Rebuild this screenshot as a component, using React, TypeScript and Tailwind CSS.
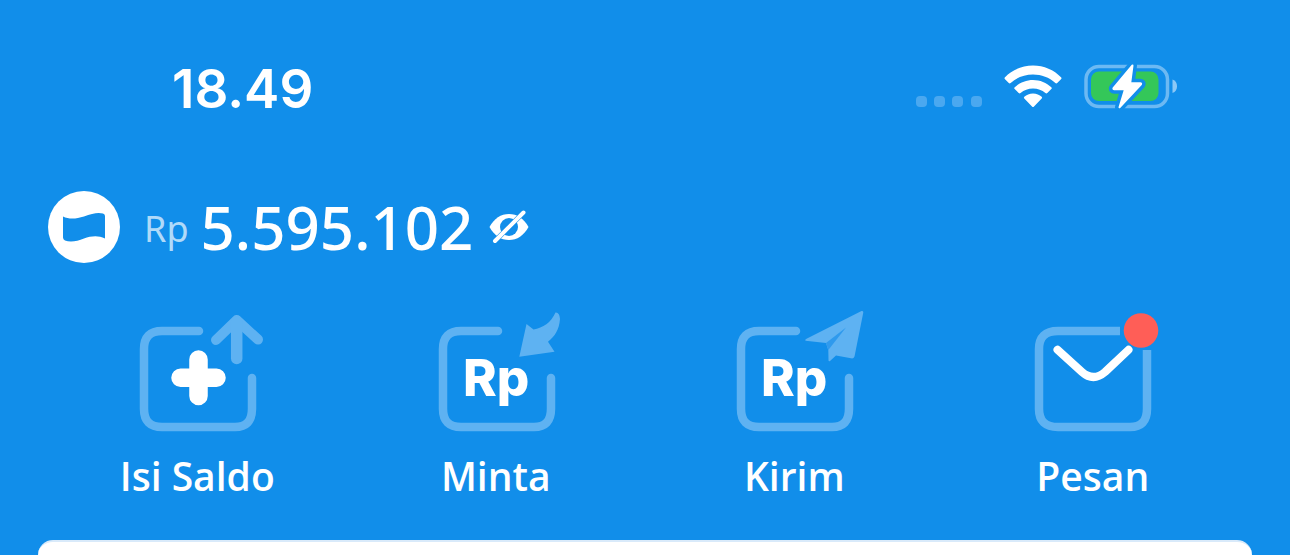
import type { ReactNode } from "react";

function SignalDots() {
  return (
    <svg viewBox="0 0 66 11" className="w-[66px] h-[11px] mt-8" aria-hidden="true">
      <g fill="#4aa8f0">
        <rect x="0" y="0" width="11" height="11" rx="4" />
        <rect x="18" y="0" width="11" height="11" rx="4" />
        <rect x="36" y="0" width="11" height="11" rx="4" />
        <rect x="55" y="0" width="11" height="11" rx="4" />
      </g>
    </svg>
  );
}

function WifiIcon() {
  return (
    <svg viewBox="0 0 58 43" className="w-[58px] h-[43px]" fill="#fff" aria-hidden="true">
      <path d="M29 0.5C40 0.5 50 5 57 12.2Q58 13.2 57 14.2L53.2 18Q52.3 18.8 51.3 17.9C45.3 12.4 37.5 9.5 29 9.5S12.7 12.4 6.7 17.9Q5.7 18.8 4.8 18L1 14.2Q0 13.2 1 12.2C8 5 18 0.5 29 0.5Z" />
      <path d="M29 15C36 15 42.5 17.8 47.3 22.3Q48.2 23.2 47.3 24.1L43.3 28Q42.4 28.8 41.4 28C38 25.2 33.8 23.6 29 23.6S20 25.2 16.6 28Q15.6 28.8 14.7 28L10.7 24.1Q9.8 23.2 10.7 22.3C15.5 17.8 22 15 29 15Z" />
      <path d="M29 28.5C32.5 28.5 35.5 29.8 37.7 31.7Q38.600 32.600 37.700 33.500L30 41.600Q29 42.600 28 41.600L20.300 33.500Q19.400 32.600 20.300 31.700C22.500 29.800 25.500 28.500 29 28.500Z" />
    </svg>
  );
}

const BOLT = "M48.5 1.5L29.5 24.2Q29 25.3 30.3 25.3H41L35.5 43.2L57 20.3Q57.5 19.3 56.3 19.2H46.2Z";

function BatteryIcon() {
  return (
    <svg viewBox="0 0 94 45" className="w-[94px] h-[45px]" strokeLinejoin="round" aria-hidden="true">
      <rect x="2" y="2.5" width="81.5" height="40" rx="13" fill="none" stroke="#6cb9f3" strokeWidth="3.5" />
      <rect x="7" y="7.5" width="67.5" height="29.5" rx="8" fill="#34c759" />
      <path d="M88.5 15.5C91.5 16.5 93 19 93 22.3S91.5 28 88.5 29Z" fill="#8cc8f6" />
      <path d={BOLT} fill="#118eea" stroke="#118eea" strokeWidth="9" />
      <path d={BOLT} fill="#fff" stroke="#fff" strokeWidth="2" />
    </svg>
  );
}

function DanaLogo() {
  return (
    <svg viewBox="0 0 72 72" className="w-[72px] h-[72px]" role="img" aria-label="DANA">
      <circle cx="36" cy="36" r="36" fill="#fff" />
      <path
        d="M15 25.5C21 28.5 28 28 36 25.5C44 22.5 50 21 55 22.5Q57 23 57 25V47.500C50 44 43 45 36 47.500C29 50.500 22 51.500 17 49.500Q15 48.500 15 46.500Z"
        fill="#118eea"
      />
    </svg>
  );
}

function HiddenEyeIcon() {
  return (
    <svg viewBox="0 0 40 34" className="w-10 h-[34px]" aria-hidden="true">
      <path d="M0.5 17C5 8.5 12 4 20 4S35 8.5 39.5 17C35 25.5 28 30 20 30S5 25.5 0.5 17Z" fill="#fff" />
      <circle cx="20" cy="17" r="9" fill="#118eea" />
      <path d="M6 31L34.5 2.5" stroke="#118eea" strokeWidth="5" />
      <path d="M6 31L34.5 2.5" stroke="#fff" strokeWidth="4" strokeLinecap="round" />
    </svg>
  );
}

const OPEN_FRAME = "M74 23H37Q19 23 19 41V101Q19 119 37 119H110Q127 119 127 101V70";

function ActionIcon({ frame = OPEN_FRAME, children }: { frame?: string; children: ReactNode }) {
  return (
    <svg viewBox="0 0 144 128" className="w-36 h-32" fill="none" aria-hidden="true">
      <path d={frame} stroke="#5eb2f2" strokeWidth="8.5" strokeLinecap={frame === OPEN_FRAME ? "round" : "butt"} />
      {children}
    </svg>
  );
}

function RpText() {
  return (
    <text x="39" y="88" fill="#fff" className="font-['Inter',sans-serif] text-[51px] font-extrabold">
      Rp
    </text>
  );
}

function TopUpIcon() {
  return (
    <ActionIcon>
      <path d="M73.5 51.5V88M55.5 69.7H91.5" stroke="#fff" strokeWidth="18.5" strokeLinecap="round" />
      <path d="M91 32L111.7 12L133 31.5" stroke="#5eb2f2" strokeWidth="10" strokeLinecap="round" strokeLinejoin="round" />
      <path d="M111.7 14V50.5" stroke="#5eb2f2" strokeWidth="11.5" strokeLinecap="round" />
    </ActionIcon>
  );
}

function RequestIcon() {
  return (
    <ActionIcon>
      <RpText />
      <path
        d="M95.3 48.7L102.5 16L109.5 21.5C119 20 127 14.5 131.5 4.5Q135.5 4 136 11C135 22 131 28 124 33.7L130.5 43.7Z"
        fill="#5eb2f2"
      />
    </ActionIcon>
  );
}

function SendIcon() {
  return (
    <ActionIcon>
      <RpText />
      <path
        d="M83.5 32.8Q82.5 31.8 84.5 30.8L139.5 3Q141.5 2.5 141.3 4.5L132.5 48.5Q131.5 51 129 50.3L114 47.5L108 53Q106.5 54 106.5 52L106.3 42L104 35Z"
        fill="#5eb2f2"
      />
      <path d="M104 35L124 19.5L106.3 42Z" fill="#2f9aed" />
    </ActionIcon>
  );
}

function MessageIcon() {
  return (
    <ActionIcon frame="M99 23H37Q18 23 18 41V101Q18 119 37 119H109Q126 119 126 101V42">
      <path
        d="M36.5 41.8L61 64Q72.3 74 84 64L107.5 41.8"
        stroke="#fff"
        strokeWidth="8"
        strokeLinecap="round"
        strokeLinejoin="round"
      />
      <circle cx="120" cy="22.5" r="17.3" fill="#ff5e57" />
    </ActionIcon>
  );
}

const actions = [
  { label: "Isi Saldo", icon: <TopUpIcon /> },
  { label: "Minta", icon: <RequestIcon /> },
  { label: "Kirim", icon: <SendIcon /> },
  { label: "Pesan", icon: <MessageIcon /> },
];

export default function App() {
  return (
    <div className="min-h-screen flex flex-col bg-[#118eea] text-white font-['Open_Sans',sans-serif]">
      <header className="flex items-start justify-between pt-16 pl-[172px] pr-[112px]">
        <time className="font-['Inter',sans-serif] font-semibold text-[53px] leading-[50px]">18.49</time>
        <div className="flex items-start">
          <SignalDots />
          <div className="ml-[22px] mt-px">
            <WifiIcon />
          </div>
          <div className="ml-[22px]">
            <BatteryIcon />
          </div>
        </div>
      </header>

      <section className="flex items-center px-12 mt-[77px] font-['Noto_Sans',sans-serif]">
        <DanaLogo />
        <span className="ml-6 pt-1 text-[36px] leading-10 text-[#b0daf9]">Rp</span>
        <span className="ml-3 text-[60px] leading-[72px] font-medium">5.595.102</span>
        <button type="button" aria-label="Sembunyikan saldo" className="ml-4">
          <HiddenEyeIcon />
        </button>
      </section>

      <nav className="grid grid-cols-4 px-12 mt-[45px]">
        {actions.map((action) => (
          <button key={action.label} type="button" className="flex flex-col items-center">
            {action.icon}
            <span className="mt-4 text-[39px] leading-12 font-semibold">{action.label}</span>
          </button>
        ))}
      </nav>

      <main className="flex-1 mt-10 mx-[38px] rounded-t-3xl border-t-2 border-[#d9eafa] bg-white" />
    </div>
  );
}
